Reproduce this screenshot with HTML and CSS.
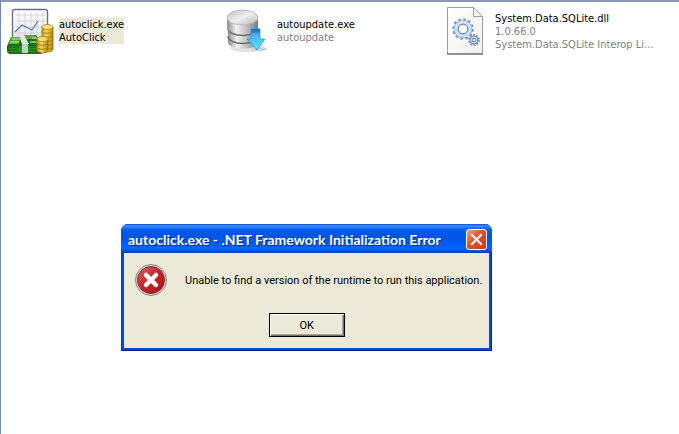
FILE: index.html
```
<!DOCTYPE html>
<html lang="en">
<head>
    <meta charset="UTF-8">
    <meta name="viewport" content="width=device-width, initial-scale=1.0">
    <title>autoclick</title>
    <link rel="stylesheet" href="styles.css">
</head>
<body>
    <main class="folder">
        <ul class="files">
            <li class="file selected">
                <svg class="file-icon" viewBox="0 0 48 48" aria-hidden="true">
                    <defs>
                        <linearGradient id="gold" x1="0" x2="1" y1="0" y2="0">
                            <stop offset="0" stop-color="#c89a1c"/>
                            <stop offset="0.4" stop-color="#f4d860"/>
                            <stop offset="1" stop-color="#b5820c"/>
                        </linearGradient>
                        <linearGradient id="board" x1="0" x2="0" y1="0" y2="1">
                            <stop offset="0" stop-color="#ffffff"/>
                            <stop offset="1" stop-color="#e2e4e8"/>
                        </linearGradient>
                    </defs>
                    <rect x="5.5" y="2.5" width="35" height="32" rx="2" fill="url(#board)" stroke="#6f7276" stroke-width="1.4"/>
                    <path d="M9 8h29M9 14h29M9 20h29M9 26h29M12 5v27M18 5v27M24 5v27M30 5v27M36 5v27" stroke="#cdd0d4" stroke-width="0.8" fill="none"/>
                    <path d="M8 25l7-7 10 5 6-9" stroke="#5d7da6" stroke-width="1.3" fill="none"/>
                    <path d="M0 39l4-9h11l2-2h12l6 9v9l-1 1H2l-2-2z" fill="#1e7018"/>
                    <path d="M4 30h11l-4 7H1zM17 28h11l2 4H16z" fill="#4fae3c"/>
                    <path d="M2 39h32v6H1z" fill="#2e8f25"/>
                    <path d="M3 35h9M5 32h8M25 31h5M23 35h9" stroke="#9bdd7c" stroke-width="1.4"/>
                    <path d="M1 40h11M1 43h11M22 40h11M22 43h12" stroke="#145a10" stroke-width="1"/>
                    <path d="M12 28h5l5 9h-7z" fill="#dce9df"/>
                    <path d="M15 37h6v9h-6z" fill="#bdd0c4"/>
                    <path d="M35 20v22c0 4 11 4 11 0V20z" fill="url(#gold)" stroke="#936809" stroke-width="0.8"/>
                    <path d="M35 24c0 3 11 3 11 0M35 28c0 3 11 3 11 0M35 32c0 3 11 3 11 0M35 36c0 3 11 3 11 0M35 40c0 3 11 3 11 0" stroke="#a4770c" fill="none"/>
                    <ellipse cx="40.5" cy="20" rx="5.5" ry="2.5" fill="#f7e07a" stroke="#ad8015" stroke-width="0.8"/>
                    <path d="M30 32v11c0 4 11 4 11 0V32z" fill="url(#gold)" stroke="#936809" stroke-width="0.8"/>
                    <path d="M30 36c0 3 11 3 11 0M30 40c0 3 11 3 11 0" stroke="#a4770c" fill="none"/>
                    <ellipse cx="35.5" cy="32" rx="5.5" ry="2.5" fill="#f7e07a" stroke="#ad8015" stroke-width="0.8"/>
                </svg>
                <div class="file-text">
                    <span class="file-name">autoclick.exe</span>
                    <span class="file-info">AutoClick</span>
                </div>
            </li>
            <li class="file">
                <svg class="file-icon" viewBox="0 0 48 48" aria-hidden="true">
                    <defs>
                        <linearGradient id="metal" x1="0" x2="1" y1="0" y2="0">
                            <stop offset="0" stop-color="#8d8d8d"/>
                            <stop offset="0.3" stop-color="#f2f2f2"/>
                            <stop offset="0.6" stop-color="#c4c4c4"/>
                            <stop offset="1" stop-color="#7d7d7d"/>
                        </linearGradient>
                        <linearGradient id="lid" x1="0" x2="1" y1="0" y2="1">
                            <stop offset="0" stop-color="#bcbcbc"/>
                            <stop offset="0.5" stop-color="#efefef"/>
                            <stop offset="1" stop-color="#b4b4b4"/>
                        </linearGradient>
                        <linearGradient id="arrow" x1="0" x2="0" y1="0" y2="1">
                            <stop offset="0" stop-color="#1060b8"/>
                            <stop offset="0.3" stop-color="#48b8f2"/>
                            <stop offset="1" stop-color="#5ce4fc"/>
                        </linearGradient>
                    </defs>
                    <ellipse cx="22" cy="41" rx="17" ry="4" fill="#e2e2e2"/>
                    <path d="M3 31v4c0 9 30 9 30 0v-4z" fill="url(#metal)"/>
                    <path d="M3 29c0 10 30 10 30 0" fill="none" stroke="#6c6c6c" stroke-width="1.6"/>
                    <path d="M3 23v5c0 9 30 9 30 0v-5z" fill="url(#metal)"/>
                    <path d="M3 21c0 10 30 10 30 0" fill="none" stroke="#6c6c6c" stroke-width="1.6"/>
                    <path d="M2 10v10c0 9 31 9 31 0V10z" fill="url(#metal)"/>
                    <ellipse cx="17.5" cy="10.5" rx="15.5" ry="7.5" fill="url(#lid)" stroke="#b2b2b2" stroke-width="0.8"/>
                    <ellipse cx="34" cy="42" rx="8" ry="2" fill="#c9d2d6"/>
                    <path d="M26 22h9v10h5l-8 11-10-11h4z" fill="url(#arrow)" stroke="#2a98dc" stroke-width="0.8"/>
                </svg>
                <div class="file-text">
                    <span class="file-name">autoupdate.exe</span>
                    <span class="file-info">autoupdate</span>
                </div>
            </li>
            <li class="file">
                <svg class="file-icon" viewBox="0 0 48 48" aria-hidden="true">
                    <defs>
                        <linearGradient id="paper" x1="0" x2="1" y1="0" y2="1">
                            <stop offset="0" stop-color="#ffffff"/>
                            <stop offset="1" stop-color="#f0f0ee"/>
                        </linearGradient>
                    </defs>
                    <path d="M4.5 .5h26l9 9V47h-35z" fill="url(#paper)" stroke="#a0a0a0"/>
                    <path d="M4 47h36" stroke="#555555"/>
                    <path d="M30.5 .5v9h9z" fill="#f7f7f7" stroke="#a0a0a0"/>
                    <circle cx="20" cy="22" r="9.5" fill="none" stroke="#7c9abc" stroke-width="2.6" stroke-dasharray="2.6 2.37"/>
                    <circle cx="20" cy="22" r="7" fill="none" stroke="#7896b8" stroke-width="4.6"/>
                    <circle cx="20" cy="22" r="7" fill="none" stroke="#cde0f3" stroke-width="3.5"/>
                    <circle cx="20" cy="22" r="4.8" fill="#fdfdfd" stroke="#5b7ca4"/>
                    <circle cx="31" cy="33" r="5" fill="none" stroke="#7c9abc" stroke-width="2" stroke-dasharray="1.8 1.34"/>
                    <circle cx="31" cy="33" r="4" fill="#cde0f3" stroke="#6c8cb0"/>
                    <circle cx="31" cy="33" r="1.8" fill="#ffffff" stroke="#5b7ca4"/>
                </svg>
                <div class="file-text">
                    <span class="file-name">System.Data.SQLite.dll</span>
                    <span class="file-info">1.0.66.0</span>
                    <span class="file-info">System.Data.SQLite Interop Li...</span>
                </div>
            </li>
        </ul>
    </main>

    <section class="dialog" role="alertdialog" aria-labelledby="dialogTitle" aria-describedby="dialogText">
        <header class="title-bar">
            <h1 id="dialogTitle">autoclick.exe - .NET Framework Initialization Error</h1>
            <button class="close" type="button" aria-label="Close">
                <svg viewBox="0 0 19 19" aria-hidden="true">
                    <path d="M5 5l9 9M14 5l-9 9" stroke="#ffffff" stroke-width="2" stroke-linecap="square"/>
                </svg>
            </button>
        </header>
        <div class="dialog-body">
            <div class="message">
                <svg class="error-icon" viewBox="0 0 32 32" aria-hidden="true">
                    <defs>
                        <linearGradient id="red" x1="0" x2="1" y1="0" y2="1">
                            <stop offset="0" stop-color="#dd6a6a"/>
                            <stop offset="0.45" stop-color="#c22a2e"/>
                            <stop offset="1" stop-color="#b00c12"/>
                        </linearGradient>
                    </defs>
                    <circle cx="16" cy="16" r="15.5" fill="#dedada" stroke="#8c8484"/>
                    <circle cx="16" cy="16" r="13.5" fill="url(#red)" stroke="#8a2226"/>
                    <path d="M11 11l10 10M21 11l-10 10" stroke="#ffffff" stroke-width="4.5" stroke-linecap="round"/>
                </svg>
                <p id="dialogText">Unable to find a version of the runtime to run this application.</p>
            </div>
            <button class="ok" type="button">OK</button>
        </div>
    </section>
</body>
</html>
```

FILE: styles.css
```
body{
    margin: 0;
    background: #fff;
    font-family: "DejaVu Sans Condensed", Tahoma, sans-serif;
    font-size: 11px;
    line-height: 13px;
    color: #000;
}
.folder{
    box-sizing: border-box;
    min-height: 100vh;
    border-top: 2px solid #8c96ac;
    border-left: 1px solid #7088b8;
}

/* tiles */
.files{
    display: grid;
    grid-template-columns: repeat(auto-fill, 218px);
    margin: 0;
    padding: 5px 0 0 6px;
    list-style: none;
}
.file{
    display: flex;
    align-items: center;
    gap: 4px;
}
.file-icon{
    flex: none;
    width: 48px;
    height: 48px;
}
.file-text{
    display: flex;
    flex-direction: column;
    white-space: nowrap;
}
.file-info{
    color: #808080;
}
.selected .file-text{
    background: #ece9d8;
}
.selected .file-info{
    color: #000;
}

/* error window */
.dialog{
    position: absolute;
    left: 121px;
    top: 224px;
    box-sizing: border-box;
    padding: 0 2px 2px;
    border: 1px solid #0838d0;
    border-top: 0;
    border-right-color: #001c98;
    border-bottom-color: #001c98;
    border-radius: 7px 7px 0 0;
    background: #0848e0;
    font-family: Roboto, Tahoma, sans-serif;
}
.title-bar{
    display: flex;
    align-items: center;
    justify-content: space-between;
    gap: 16px;
    height: 29px;
    margin: 0 -3px;
    padding: 2px 5px 0 7px;
    box-sizing: border-box;
    border-radius: 7px 7px 0 0;
    background: linear-gradient(#0a4cc8 0, #3c90fc 2px, #0a62ee 5px, #0054e4 10px, #0058ee 18px, #0266fc 24px, #0050e0 27px, #003cc0 29px);
}
.title-bar h1{
    margin: 0;
    color: #fff;
    font-family: Lato, "Trebuchet MS", sans-serif;
    font-size: 14px;
    font-weight: bold;
    line-height: 18px;
    white-space: nowrap;
    text-shadow: 1px 1px #0a2a88;
}
.close{
    flex: none;
    width: 21px;
    height: 21px;
    padding: 0;
    border: 1px solid #fff;
    border-radius: 3px;
    background: linear-gradient(135deg, #f0a088, #e0522c 45%, #c83c10);
}
.close svg{
    display: block;
}
.dialog-body{
    display: flex;
    flex-direction: column;
    align-items: center;
    gap: 17px;
    padding: 11px 0;
    background: #ece9d8;
}
.message{
    display: flex;
    align-items: center;
    gap: 18px;
    padding: 0 7px 0 11px;
}
.message p{
    margin: 0;
    white-space: nowrap;
}
.error-icon{
    flex: none;
    width: 32px;
    height: 32px;
}
.ok{
    width: 76px;
    height: 24px;
    padding: 0;
    border: 1px solid #000;
    background: #ece9d8;
    box-shadow: inset 1px 1px #fff, inset -1px -1px #716f64, inset -2px -2px #aca899;
    font: inherit;
    color: #000;
}
```
